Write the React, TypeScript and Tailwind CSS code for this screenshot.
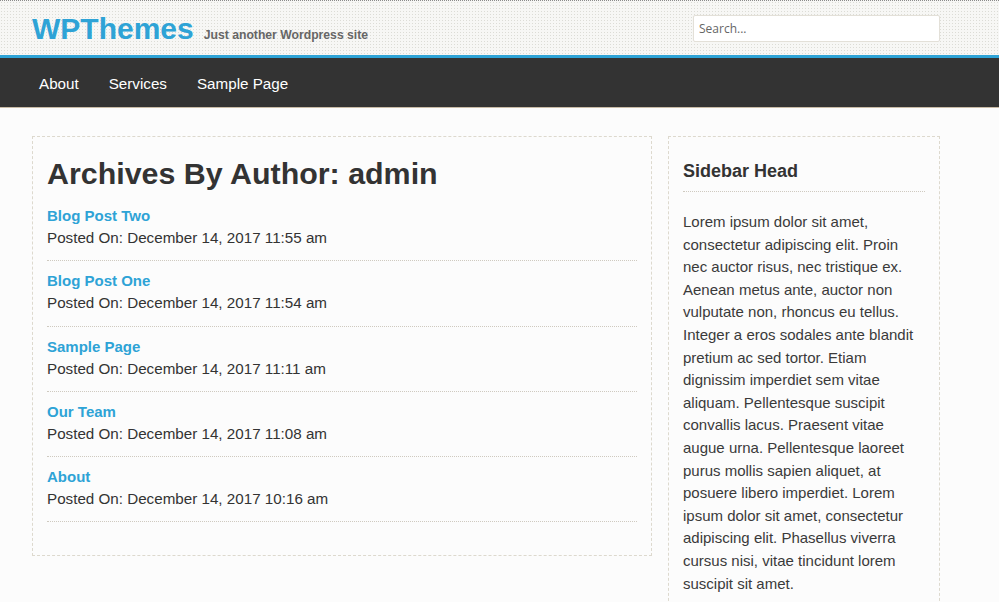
import React from "react";

const posts = [
  { title: "Blog Post Two", date: "December 14, 2017 11:55 am" },
  { title: "Blog Post One", date: "December 14, 2017 11:54 am" },
  { title: "Sample Page", date: "December 14, 2017 11:11 am" },
  { title: "Our Team", date: "December 14, 2017 11:08 am" },
  { title: "About", date: "December 14, 2017 10:16 am" },
];

const lorem =
  "Lorem ipsum dolor sit amet, consectetur adipiscing elit. Proin nec auctor risus, nec tristique ex. Aenean metus ante, auctor non vulputate non, rhoncus eu tellus. Integer a eros sodales ante blandit pretium ac sed tortor. Etiam dignissim imperdiet sem vitae aliquam. Pellentesque suscipit convallis lacus. Praesent vitae augue urna. Pellentesque laoreet purus mollis sapien aliquet, at posuere libero imperdiet. Lorem ipsum dolor sit amet, consectetur adipiscing elit. Phasellus viverra cursus nisi, vitae tincidunt lorem suscipit sit amet.";

export default function App() {
  return (
    <div className="min-h-[602px] bg-[#fcfcfc] font-['Liberation_Sans',Arial,sans-serif] text-[#333]">
      <header className="border-t border-dotted border-[#8a8a8a] bg-[#f7f7f5] bg-[radial-gradient(#dcdcd6_1px,transparent_1px)] bg-[length:3px_3px]">
        <div className="ml-[32px] flex h-[54px] w-[908px] items-center justify-between">
          <div className="flex items-baseline pt-[2px]">
            <span className="text-[30px] font-bold leading-none text-[#2ea3d6]">WPThemes</span>
            <span className="ml-[10px] text-[12.2px] font-bold text-[#666]">Just another Wordpress site</span>
          </div>
          <input
            placeholder="Search..."
            className="mt-[1px] ml-[1px] h-[27px] w-[247px] rounded-[2px] border border-[#e3e0d8] bg-white px-[5px] font-['Open_Sans',sans-serif] text-[12px] text-[#333] placeholder:text-[#666] outline-none"
          />
        </div>
      </header>
      <div className="h-[3px] bg-[#2ea3d6]" />
      <nav className="h-[50px] border-b border-[#c9bba6] bg-[#333]">
        <ul className="ml-[39px] flex h-full items-center gap-[30px] pt-[4px] text-[15.2px] text-white">
          <li>About</li>
          <li>Services</li>
          <li>Sample Page</li>
        </ul>
      </nav>
      <main className="ml-[32px] mt-[28px] flex w-[908px] items-start gap-[16px]">
        <section className="w-[620px] border border-dashed border-[#ddd9ce] px-[14px] pb-[33px] pt-[16px]">
          <h1 className="text-[30.4px] font-bold leading-[40px] text-[#333]">Archives By Author: admin</h1>
          <div className="mt-[12px]">
            {posts.map((p, i) => (
              <div key={i} className={`border-b border-dotted border-[#cfcac0] pb-[11px] ${i === 0 ? "pt-0" : "pt-[9px]"}`}>
                <a className="block text-[15px] font-bold leading-[22px] text-[#2ea3d6]">{p.title}</a>
                <div className="text-[15.2px] leading-[22.25px]">Posted On: {p.date}</div>
              </div>
            ))}
          </div>
        </section>
        <aside className="w-[272px] border border-dashed border-[#ddd9ce] px-[14px] pt-[22px] pb-[20px]">
          <h3 className="border-b border-dotted border-[#cfcac0] pb-[8px] text-[18px] font-bold leading-[24px] text-[#333]">Sidebar Head</h3>
          <p className="mt-[19px] pr-[1px] text-[15px] leading-[22.6px] text-[#3a3a3a]">{lorem}</p>
        </aside>
      </main>
    </div>
  );
}
